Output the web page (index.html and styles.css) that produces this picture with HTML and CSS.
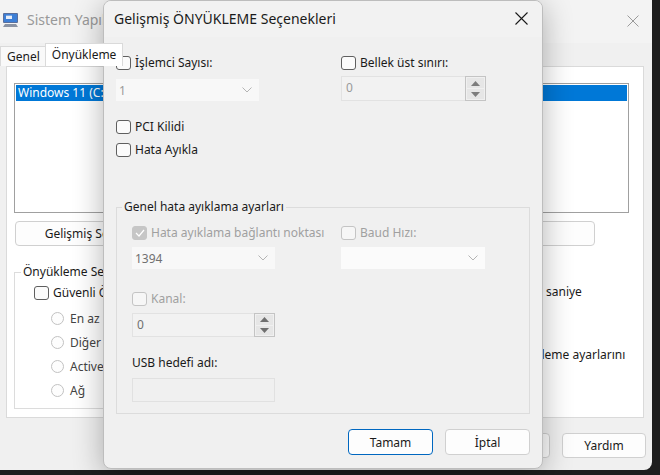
FILE: index.html
```html
<!DOCTYPE html>
<html lang="tr">
<head>
    <meta charset="UTF-8">
    <meta name="viewport" content="width=device-width, initial-scale=1.0">
    <title>Gelişmiş ÖNYÜKLEME Seçenekleri</title>
    <link rel="stylesheet" href="styles.css">
</head>
<body>
    <div class="desktop">
        <div class="sysconfig">
            <div class="titlebar">
                <svg class="app-icon" width="17" height="16" viewBox="0 0 17 16">
                    <rect x="1" y="1" width="15" height="10" rx="1" fill="#5a6f9c"/>
                    <rect x="2" y="2" width="13" height="8" fill="#3d7fd6"/>
                    <rect x="4" y="3" width="6" height="4" fill="#e8eef8"/>
                    <rect x="4" y="3" width="6" height="1" fill="#7aa6e0"/>
                    <path d="M3 12 L14 12 L16 15 L1 15 Z" fill="#8b93a3"/>
                </svg>
                <span class="win-title">Sistem Yapılandırması</span>
                <svg class="win-close" width="12" height="12" viewBox="0 0 12 12">
                    <path d="M0.5 0.5 L11.5 11.5 M11.5 0.5 L0.5 11.5" stroke="#9a9a9a" stroke-width="1"/>
                </svg>
            </div>
            <div class="tabs">
                <span class="tab">Genel</span>
                <span class="tab active">Önyükleme</span>
                <span class="tab">Hizmetler</span>
                <span class="tab">Başlangıç</span>
                <span class="tab">Araçlar</span>
            </div>
            <div class="panel">
                <div class="listbox">
                    <div class="list-item selected">Windows 11 (C:\WINDOWS) : Geçerli işletim sistemi; Varsayılan İS</div>
                </div>
                <div class="panel-buttons">
                    <button class="btn">Gelişmiş Seçenekler...</button>
                    <button class="btn">Varsayılan olarak ayarla</button>
                    <button class="btn">Sil</button>
                </div>
                <div class="boot-area">
                    <fieldset class="group boot-group">
                        <legend>Önyükleme Seçenekleri</legend>
                        <label class="check"><span class="box"></span>Güvenli Önyükleme</label>
                        <div class="radios">
                            <label class="radio"><span class="dot"></span>En az</label>
                            <label class="radio"><span class="dot"></span>Diğer kabuk</label>
                            <label class="radio"><span class="dot"></span>Active Directory onarımı</label>
                            <label class="radio"><span class="dot"></span>Ağ</label>
                        </div>
                    </fieldset>
                    <div class="timeout">
                        <span class="timeout-label">Zaman aşımı:</span>
                        <div class="timeout-row">
                            <span class="textbox small">30</span>
                            <span>saniye</span>
                        </div>
                        <label class="check persist"><span class="box"></span><span>Tüm önyükleme ayarlarını<br>kalıcı yap</span></label>
                    </div>
                </div>
            </div>
            <div class="footer">
                <button class="btn">Tamam</button>
                <button class="btn">İptal</button>
                <button class="btn">Uygula</button>
                <button class="btn">Yardım</button>
            </div>
        </div>

        <div class="dialog">
            <div class="dialog-title">
                <span>Gelişmiş ÖNYÜKLEME Seçenekleri</span>
                <svg class="dialog-close" width="13" height="13" viewBox="0 0 13 13">
                    <path d="M0.5 0.5 L12.5 12.5 M12.5 0.5 L0.5 12.5" stroke="#1a1a1a" stroke-width="1.1"/>
                </svg>
            </div>
            <div class="dialog-body">
                <div class="cols top-cols">
                    <div class="col">
                        <label class="check"><span class="box"></span>İşlemci Sayısı:</label>
                        <div class="combo"><span>1</span>
                            <svg class="chev" width="10" height="6" viewBox="0 0 10 6"><path d="M0.5 0.5 L5 5 L9.5 0.5" fill="none" stroke="#b4b4b4"/></svg>
                        </div>
                    </div>
                    <div class="col">
                        <label class="check"><span class="box"></span>Bellek üst sınırı:</label>
                        <div class="spinner memory">
                            <span class="spin-text">0</span>
                            <span class="spin-buttons">
                                <span class="spin-btn"><svg width="9" height="5" viewBox="0 0 9 5"><path d="M0 5 L4.5 0 L9 5 Z" fill="#7d7d7d"/></svg></span>
                                <span class="spin-btn"><svg width="9" height="5" viewBox="0 0 9 5"><path d="M0 0 L4.5 5 L9 0 Z" fill="#7d7d7d"/></svg></span>
                            </span>
                        </div>
                    </div>
                </div>
                <label class="check pci"><span class="box"></span>PCI Kilidi</label>
                <label class="check debug"><span class="box"></span>Hata Ayıkla</label>

                <fieldset class="group debug-group">
                    <legend>Genel hata ayıklama ayarları</legend>
                    <div class="cols">
                        <div class="col">
                            <label class="check disabled"><span class="box checked">
                                <svg width="10" height="8" viewBox="0 0 10 8"><path d="M1 4 L4 7 L9 1" fill="none" stroke="#fff" stroke-width="1.2"/></svg>
                            </span>Hata ayıklama bağlantı noktası</label>
                            <div class="combo"><span class="dark">1394</span>
                                <svg class="chev" width="10" height="6" viewBox="0 0 10 6"><path d="M0.5 0.5 L5 5 L9.5 0.5" fill="none" stroke="#b4b4b4"/></svg>
                            </div>
                        </div>
                        <div class="col">
                            <label class="check disabled"><span class="box"></span>Baud Hızı:</label>
                            <div class="combo light">
                                <svg class="chev" width="10" height="6" viewBox="0 0 10 6"><path d="M0.5 0.5 L5 5 L9.5 0.5" fill="none" stroke="#b4b4b4"/></svg>
                            </div>
                        </div>
                    </div>
                    <label class="check disabled kanal"><span class="box"></span>Kanal:</label>
                    <div class="spinner channel">
                        <span class="spin-text dark">0</span>
                        <span class="spin-buttons">
                            <span class="spin-btn"><svg width="9" height="5" viewBox="0 0 9 5"><path d="M0 5 L4.5 0 L9 5 Z" fill="#6f6f6f"/></svg></span>
                            <span class="spin-btn"><svg width="9" height="5" viewBox="0 0 9 5"><path d="M0 0 L4.5 5 L9 0 Z" fill="#6f6f6f"/></svg></span>
                        </span>
                    </div>
                    <div class="usb-label">USB hedefi adı:</div>
                    <div class="textbox usb"></div>
                </fieldset>

                <div class="dialog-buttons">
                    <button class="btn default">Tamam</button>
                    <button class="btn">İptal</button>
                </div>
            </div>
        </div>
    </div>
</body>
</html>
```

FILE: styles.css
```css
* {
    box-sizing: border-box;
}

body {
    margin: 0;
    background: #1e1e1e;
    font-family: 'Noto Sans', 'Liberation Sans', sans-serif;
    font-size: 12px;
    color: #1a1a1a;
}

.desktop {
    position: relative;
    width: 660px;
    height: 475px;
    overflow: hidden;
}

/* background window: Sistem Yapılandırması */

.sysconfig {
    width: 652px;
    height: 470px;
    background: #f0f0f0;
    border-radius: 0 0 8px 0;
    display: flex;
    flex-direction: column;
    overflow: hidden;
}

.titlebar {
    height: 43px;
    display: flex;
    align-items: center;
    padding: 0 12px 4px 2px;
    background: #f3f3f3;
}

.win-title {
    margin-left: 8px;
    font-size: 14px;
    color: #999;
    flex: 1;
}

.win-close {
    margin-right: 1px;
    margin-top: 2px;
}

.tabs {
    height: 23px;
    display: flex;
    align-items: flex-end;
}

.tab {
    height: 20px;
    padding: 0 6px;
    line-height: 19px;
    background: #f9f9f9;
    border: 1px solid #dadada;
    border-bottom: none;
}

.tab.active {
    height: 23px;
    line-height: 21px;
    background: #fff;
    margin: 0 -2px;
    position: relative;
    z-index: 1;
}

.panel {
    height: 352px;
    margin: 0 8px 0 6px;
    background: #fff;
    border: 1px solid #dadada;
    padding: 16px 0 0 7px;
}

.listbox {
    width: 615px;
    height: 130px;
    border: 1px solid #a0a0a0;
    padding: 1px;
}

.list-item {
    height: 16px;
    line-height: 16px;
    padding-left: 2px;
    white-space: nowrap;
    overflow: hidden;
}

.list-item.selected {
    background: #0078d7;
    color: #fff;
}

.panel-buttons {
    margin-top: 8px;
    display: flex;
    gap: 9px;
    padding-left: 1px;
}

.panel-buttons .btn {
    width: 179px;
    height: 25px;
}

.panel-buttons .btn:last-child {
    width: 199px;
    margin-left: 5px;
}

.boot-area {
    display: flex;
    margin-top: 18px;
}

.group {
    margin: 0;
    border: 1px solid #dcdcdc;
    min-width: 0;
}

.group legend {
    padding: 0 2px;
    line-height: 16px;
}

.boot-group {
    width: 380px;
    height: 145px;
    padding: 5px 10px 0 19px;
}

.boot-group legend {
    margin-left: -13px;
}

.radios {
    display: flex;
    flex-direction: column;
    gap: 8px;
    margin: 9px 0 0 17px;
    color: #444;
}

.radio {
    display: flex;
    align-items: center;
    gap: 6px;
    height: 16px;
}

.dot {
    width: 13px;
    height: 13px;
    border: 1px solid #c2c2c2;
    border-radius: 50%;
    background: #fdfdfd;
}

.timeout {
    margin-left: 66px;
    display: flex;
    flex-direction: column;
}

.timeout-label {
    line-height: 16px;
}

.timeout-row {
    display: flex;
    align-items: center;
    gap: 6px;
}

.textbox {
    display: block;
    background: #f0f0f0;
    border: 1px solid #e1e1e1;
}

.textbox.small {
    width: 80px;
    height: 22px;
    background: #fff;
    line-height: 20px;
    padding-left: 4px;
}

.persist {
    margin-top: 53px;
    align-items: flex-start;
    height: auto;
    line-height: 16px;
}

.footer {
    flex: 1;
    display: flex;
    justify-content: flex-end;
    align-items: flex-start;
    gap: 12px;
    padding: 15px 6px 0 0;
}

.footer .btn {
    width: 84px;
    height: 25px;
}

/* buttons and check boxes */

.btn {
    font-family: inherit;
    font-size: 12px;
    color: #1a1a1a;
    background: #fdfdfd;
    border: 1px solid #d0d0d0;
    border-radius: 4px;
    padding: 0;
    white-space: nowrap;
}

.btn.default {
    border-color: #0067c0;
}

.check {
    display: flex;
    align-items: center;
    gap: 4px;
    height: 16px;
    line-height: 16px;
    white-space: nowrap;
}

.box {
    width: 15px;
    height: 14px;
    flex: none;
    border: 1px solid #5f5f5f;
    border-radius: 3px;
    background: #fbfbfb;
    display: flex;
    align-items: center;
    justify-content: center;
}

.check.disabled {
    color: #a0a0a0;
}

.check.disabled .box {
    border-color: #c4c4c4;
    background: #f6f6f6;
}

.check.disabled .box.checked {
    background: #c6c6c6;
    border-color: #c6c6c6;
}

/* dialog */

.dialog {
    position: absolute;
    left: 103px;
    top: 0;
    width: 440px;
    height: 469px;
    background: #f0f0f0;
    border: 1px solid #bdbdbd;
    border-radius: 8px;
    box-shadow: 0 6px 30px rgba(0, 0, 0, 0.3);
    overflow: hidden;
}

.dialog-title {
    height: 36px;
    display: flex;
    align-items: center;
    justify-content: space-between;
    padding: 0 14px 2px 10px;
    font-size: 14px;
    background: #f2f2f2;
}

.dialog-body {
    padding: 18px 12px 0 12px;
}

.cols {
    display: grid;
    grid-template-columns: 225px 1fr;
}

.combo {
    width: 143px;
    height: 22px;
    margin-top: 8px;
    background: #f8f8f8;
    display: flex;
    align-items: center;
    justify-content: space-between;
    padding: 0 7px 0 3px;
    color: #9a9a9a;
}

.combo.light {
    width: 144px;
    background: #fbfbfb;
    justify-content: flex-end;
}

.combo .dark,
.spin-text.dark {
    color: #707070;
}

.spinner {
    display: flex;
}

.spinner.memory {
    width: 145px;
    height: 25px;
    margin-top: 5px;
}

.spin-text {
    flex: 1;
    background: #f2f2f2;
    border: 1px solid #e2e2e2;
    border-right: none;
    padding-left: 4px;
    line-height: 22px;
    color: #9a9a9a;
}

.spin-buttons {
    width: 21px;
    display: flex;
    flex-direction: column;
    border: 1px solid #c4c4c4;
    padding: 1px;
    gap: 1px;
    background: #f0f0f0;
}

.spin-btn {
    flex: 1;
    display: flex;
    align-items: center;
    justify-content: center;
    background: #e6e6e6;
}

.pci {
    margin-top: 18px;
}

.debug {
    margin-top: 7px;
}

.debug-group {
    width: 414px;
    margin-top: 41px;
    padding: 10px 10px 11px 15px;
}

.debug-group legend {
    margin-left: -10px;
}

.debug-group .cols {
    grid-template-columns: 209px 1fr;
}

.debug-group .combo {
    margin-top: 6px;
}

.kanal {
    margin-top: 22px;
}

.spinner.channel {
    width: 143px;
    height: 24px;
    margin-top: 6px;
}

.usb-label {
    margin-top: 18px;
    line-height: 16px;
}

.textbox.usb {
    width: 143px;
    height: 24px;
    margin-top: 7px;
}

.dialog-buttons {
    display: flex;
    justify-content: flex-end;
    gap: 12px;
    margin-top: 15px;
}

.dialog-buttons .btn {
    width: 85px;
    height: 26px;
}
```
